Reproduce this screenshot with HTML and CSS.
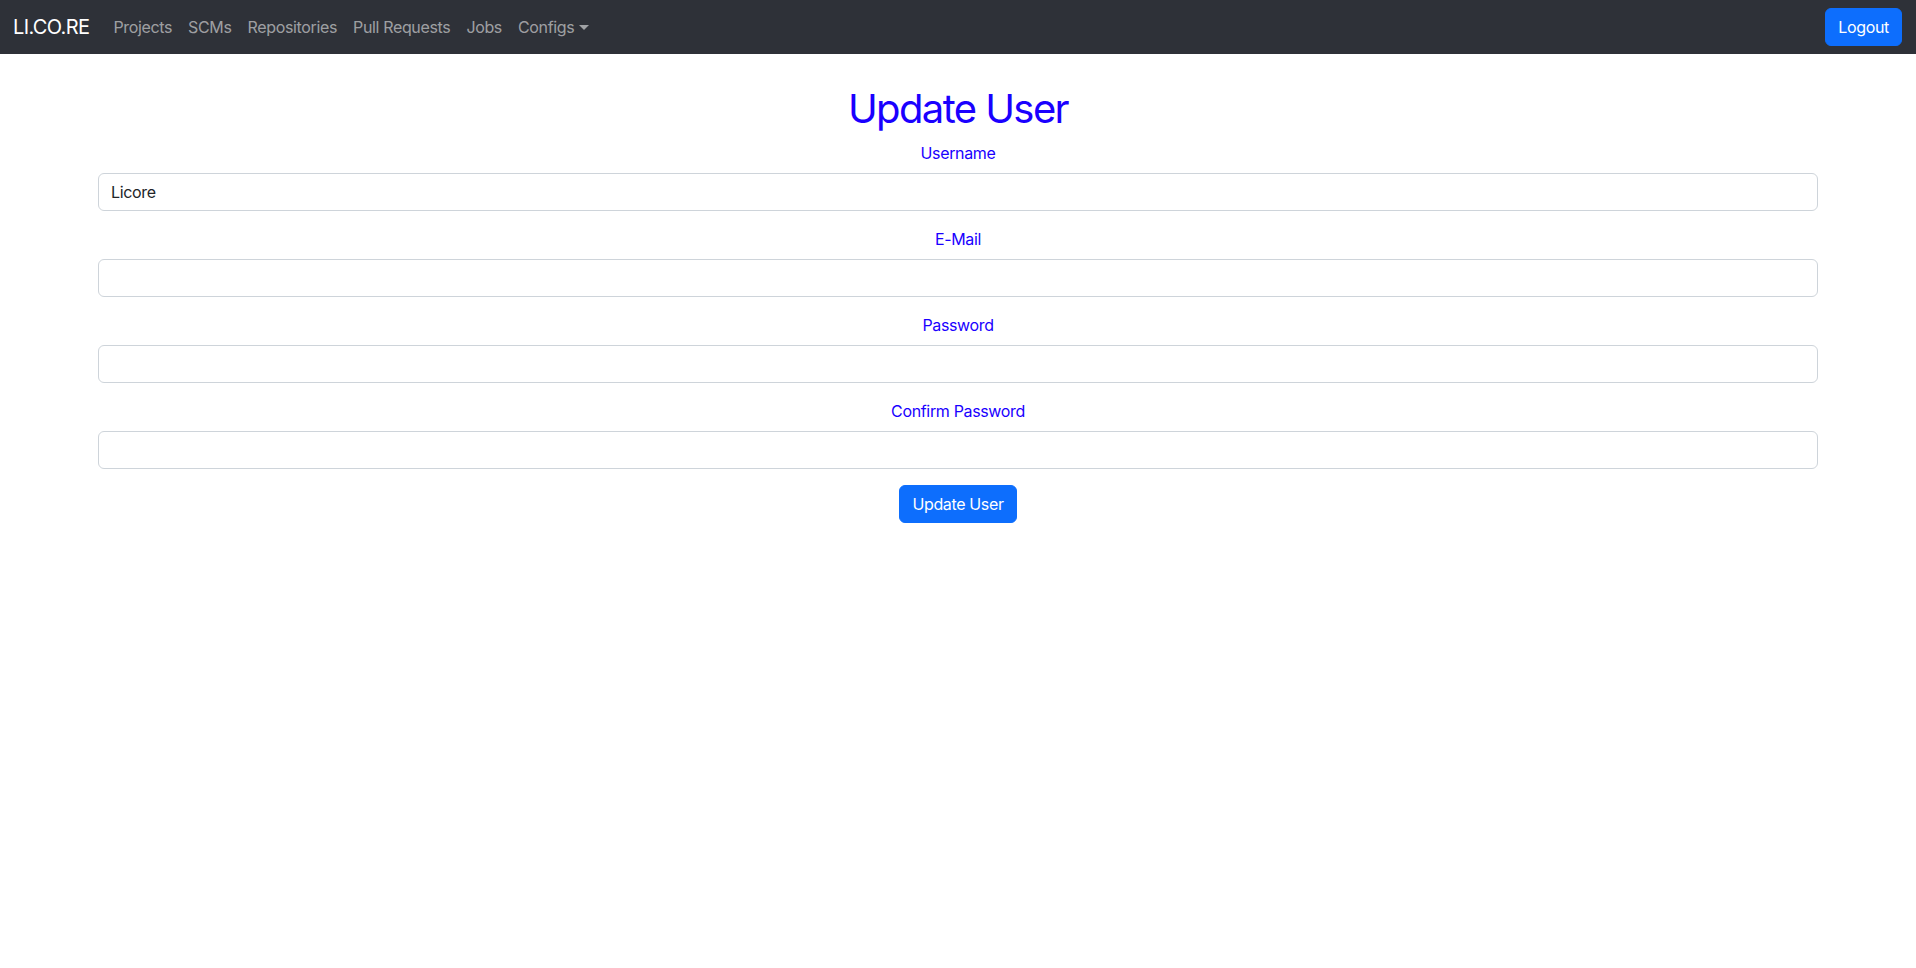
FILE: index.html
```html
<!DOCTYPE html>
<html lang="en">
<head>
<meta charset="utf-8">
<title>Update User</title>
<link rel="stylesheet" href="styles.css">
</head>
<body>
<nav class="navbar">
  <div class="nav-left">
    <a class="brand" href="#">LI.CO.RE</a>
    <ul class="nav-links">
      <li><a href="#">Projects</a></li>
      <li><a href="#">SCMs</a></li>
      <li><a href="#">Repositories</a></li>
      <li><a href="#">Pull Requests</a></li>
      <li><a href="#">Jobs</a></li>
      <li><a href="#" class="dropdown">Configs</a></li>
    </ul>
  </div>
  <button class="btn btn-primary">Logout</button>
</nav>
<main class="content">
  <h1 class="title">Update User</h1>
  <form class="form">
    <div class="group">
      <label class="label" for="username">Username</label>
      <input class="input" id="username" type="text" value="Licore">
    </div>
    <div class="group">
      <label class="label" for="email">E-Mail</label>
      <input class="input" id="email" type="email">
    </div>
    <div class="group">
      <label class="label" for="password">Password</label>
      <input class="input" id="password" type="password">
    </div>
    <div class="group">
      <label class="label" for="confirm">Confirm Password</label>
      <input class="input" id="confirm" type="password">
    </div>
    <div class="actions">
      <button type="button" class="btn btn-primary">Update User</button>
    </div>
  </form>
</main>
</body>
</html>
```
FILE: styles.css
```css
* { box-sizing: border-box; }
html, body { margin: 0; padding: 0; }
body {
  font-family: Inter, "Liberation Sans", sans-serif;
  font-size: 16px;
  line-height: 1.5;
  color: #212529;
  background: #fff;
  letter-spacing: -0.35px;
}
.navbar {
  height: 54px;
  background: #2e3138;
  display: flex;
  align-items: center;
  justify-content: space-between;
  padding: 0 14px 0 13px;
}
.nav-left { display: flex; align-items: center; }
.brand {
  color: #fff;
  text-decoration: none;
  font-size: 20px;
  line-height: 30px;
  margin-right: 16px;
  letter-spacing: -0.6px;
}
.nav-links {
  list-style: none;
  margin: 0;
  padding: 0;
  display: flex;
}
.nav-links a {
  display: block;
  padding: 8px 8px;
  color: rgba(255,255,255,0.55);
  text-decoration: none;
  font-size: 16px;
  line-height: 24px;
}
.dropdown::after {
  content: "";
  display: inline-block;
  margin-left: 5px;
  vertical-align: 3px;
  border-top: 5px solid;
  border-right: 5px solid transparent;
  border-left: 5px solid transparent;
}
.btn {
  font-family: inherit;
  font-size: 16px;
  line-height: 24px;
  padding: 6px 12px;
  border-radius: 6px;
  border: 1px solid transparent;
  letter-spacing: -0.35px;
  cursor: pointer;
}
.btn-primary {
  background: #0d6efd;
  border-color: #0d6efd;
  color: #fff;
}
.content {
  padding: 0 98px;
}
.title {
  margin: 31px 0 8px;
  font-size: 40px;
  line-height: 48px;
  font-weight: 400;
  color: #1a00ff;
  text-align: center;
  letter-spacing: -1.6px;
}
.group { margin-bottom: 16px; }
.label {
  display: block;
  text-align: center;
  color: #1a00ff;
  margin-bottom: 8px;
  line-height: 24px;
}
.input {
  display: block;
  width: 100%;
  height: 38px;
  padding: 6px 12px;
  font-family: inherit;
  font-size: 16px;
  line-height: 24px;
  letter-spacing: -0.35px;
  color: #212529;
  border: 1px solid #ced4da;
  border-radius: 6px;
  background: #fff;
}
.actions { text-align: center; }
```
